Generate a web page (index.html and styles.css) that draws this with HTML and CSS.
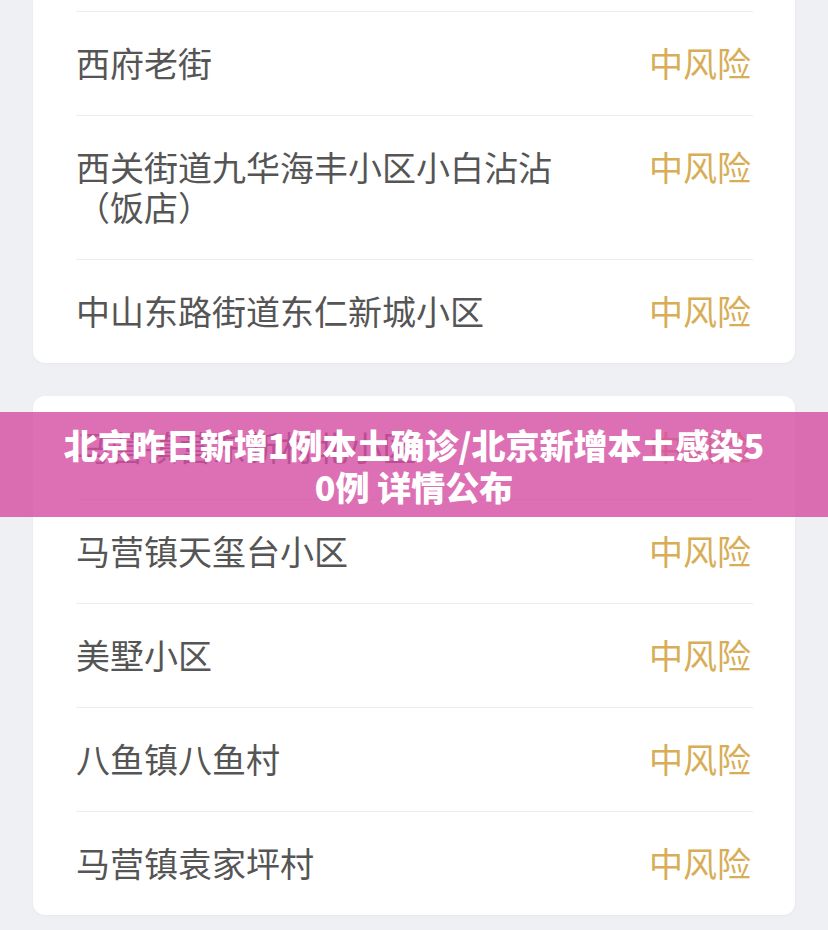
FILE: index.html
```html
<!DOCTYPE html>
<html lang="zh-CN">
<head>
<meta charset="utf-8">
<title>风险地区</title>
<link rel="stylesheet" href="styles.css">
</head>
<body>
<div class="page">
  <div class="card card-top">
    <div class="row"><div class="name">西府老街</div><div class="risk">中风险</div></div>
    <div class="row"><div class="name">西关街道九华海丰小区小白沾沾（饭店）</div><div class="risk">中风险</div></div>
    <div class="row"><div class="name">中山东路街道东仁新城小区</div><div class="risk">中风险</div></div>
  </div>
  <div class="card">
    <div class="row"><div class="name">马营镇营东新村北小区</div><div class="risk">中风险</div></div>
    <div class="row"><div class="name">马营镇天玺台小区</div><div class="risk">中风险</div></div>
    <div class="row"><div class="name">美墅小区</div><div class="risk">中风险</div></div>
    <div class="row"><div class="name">八鱼镇八鱼村</div><div class="risk">中风险</div></div>
    <div class="row"><div class="name">马营镇袁家坪村</div><div class="risk">中风险</div></div>
  </div>
</div>
<div class="banner"><div class="banner-text">北京昨日新增1例本土确诊/北京新增本土感染50例 详情公布</div></div>
</body>
</html>
```
FILE: styles.css
```css
html, body {
  margin: 0;
  padding: 0;
}
body {
  background: #eef0f3;
  font-family: "Noto Sans CJK SC", "Noto Sans", sans-serif;
  width: 828px;
  height: 930px;
  overflow: hidden;
  position: relative;
}
.page {
  padding: 0 33px;
  display: flex;
  flex-direction: column;
  gap: 33px;
}
.card {
  background: #ffffff;
  border-radius: 12px;
  padding: 0 42px 0 43px;
  box-shadow: 0 1px 3px rgba(0, 0, 0, 0.04);
}
.card-top {
  border-radius: 0 0 12px 12px;
  padding-top: 11px;
}
.row {
  display: flex;
  justify-content: space-between;
  align-items: flex-start;
  gap: 80px;
  padding: 30.5px 0 32.5px;
  font-size: 34px;
  line-height: 40px;
}
.row + .row,
.card-top .row {
  border-top: 1px solid #ebebeb;
}
.name {
  color: #555555;
  flex: 1;
}
.risk {
  color: #d7ae56;
  white-space: nowrap;
  padding-right: 2px;
}
.banner {
  position: absolute;
  left: 0;
  top: 412px;
  width: 828px;
  height: 105px;
  background: rgba(212, 76, 161, 0.8);
  display: flex;
  align-items: center;
  justify-content: center;
  box-sizing: border-box;
  padding: 3px 57px 0;
}
.banner-text {
  color: #ffffff;
  font-family: "Noto Sans CJK SC", "Noto Sans", sans-serif;
  font-weight: 900;
  font-size: 34px;
  line-height: 42px;
  text-align: center;
  word-break: break-all;
}
```
